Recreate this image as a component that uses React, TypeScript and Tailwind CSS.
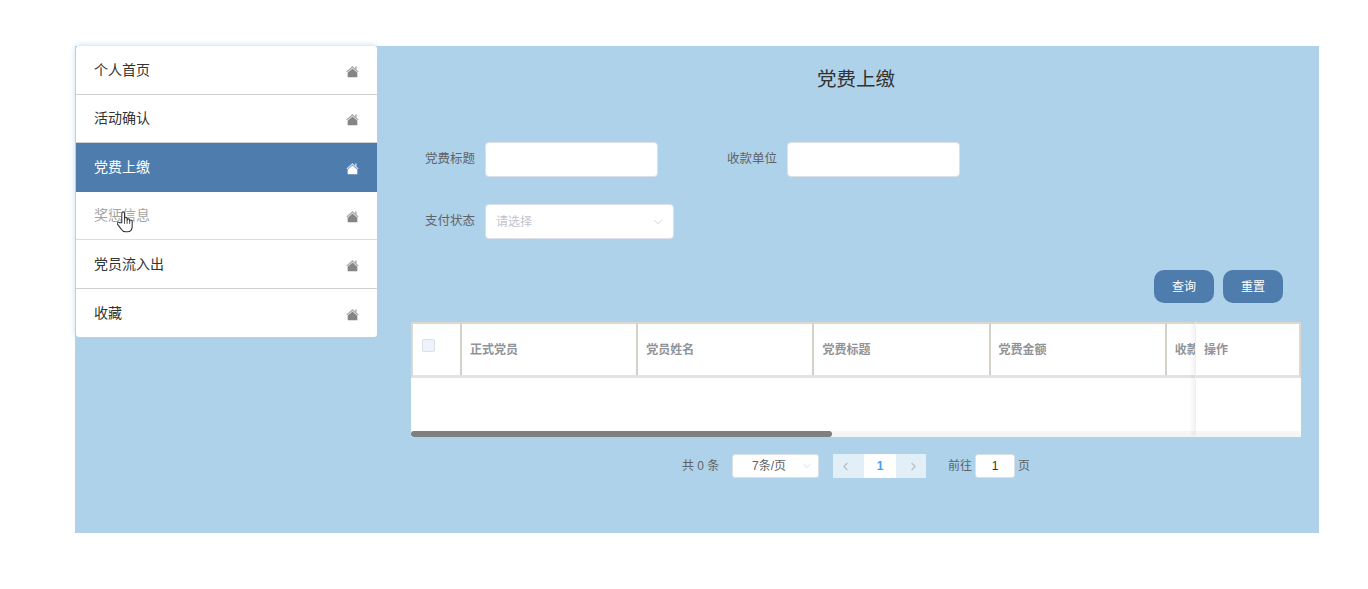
import React from "react";
import { ChevronDown, ChevronLeft, ChevronRight } from "lucide-react";

const items = ["个人首页", "活动确认", "党费上缴", "奖惩信息", "党员流入出", "收藏"];

function House({ className }: { className: string }) {
  return (
    <svg viewBox="0 0 14 13" className={className} fill="currentColor">
      <path d="M7 .6 L.4 6.6 L1.3 7.5 L7 2.4 L12.7 7.5 L13.6 6.6 L11.4 4.6 V1.2 H9.8 V3.2 Z" opacity="0.7" />
      <path d="M7 3.2 L1.8 7.8 V12.8 H12.2 V7.8 Z" />
    </svg>
  );
}

function Hand() {
  return (
    <svg viewBox="1 1 16 20.5" className="absolute left-[41px] top-[19.5px] w-[17px] h-[22px]">
      <path
        d="M5.5 12 V3 a1.3 1.3 0 0 1 2.6 0 V9 V8 a1.2 1.2 0 0 1 2.4 0 V9.5 a1.2 1.2 0 0 1 2.4 0 V10.5 a1.2 1.2 0 0 1 2.4 0 V15 c0 3 -1.6 5.5 -4.5 5.5 H9 c-2 0 -3 -1 -4 -2.5 L1.5 13.5 c-.9 -1.3 .8 -2.6 2 -1.5 Z"
        fill="#fff"
        stroke="#333"
        strokeWidth="1"
        strokeLinejoin="round"
      />
      <path d="M8.1 9 V13 M10.5 9.5 V13 M12.9 10.5 V13" stroke="#333" strokeWidth="0.8" fill="none" />
    </svg>
  );
}

const cols = ["正式党员", "党员姓名", "党费标题", "党费金额", "收款单位"];

export default function App() {
  return (
    <div className="w-[1368px] h-[589px] bg-white pt-[46px] pl-[75px] overflow-hidden font-['Liberation_Sans','Noto_Sans_CJK_SC',sans-serif]">
      <div className="w-[1244px] h-[487px] bg-[#aed2ea] flex">
        <ul className="w-[301px] h-[291px] ml-px bg-white rounded-[3px] shadow-[0_0_6px_rgba(174,210,234,0.9)] shrink-0 overflow-hidden">
          {items.map((t, i) => (
            <li
              key={t}
              className={`relative h-[48.5px] pl-[18px] pr-[18px] flex items-center justify-between text-[14px] border-b ${
                i === 2
                  ? "bg-[#4d7cad] text-white border-[#4d7cad]"
                  : i === 3
                    ? "text-[#a3a3a3] border-[#dcdcdc]"
                    : "text-[#333] border-[#d0d0d0]"
              } ${i === 5 ? "border-b-0" : ""}`}
            >
              <span className="mt-[1px]">{t}</span>
              <House className={`w-[13px] h-[13px] mt-[3px] ${i === 2 ? "text-white" : "text-[#858585]"}`} />
              {i === 3 && <Hand />}
            </li>
          ))}
        </ul>

        <div className="flex-1 pl-[34px] pr-[18px] min-w-0">
          <h1 className="text-[19.5px] leading-[28px] text-[#333] text-center mt-[19px]">党费上缴</h1>

          <div className="flex items-center mt-[49px] h-[35px] text-[12.5px] text-[#606266]">
            <label className="w-[74px] pr-[10px] text-right whitespace-nowrap">党费标题</label>
            <div className="w-[173px] h-[35px] bg-white rounded-[4px] border border-[#dcdfe6]" />
            <label className="w-[129px] pr-[10px] text-right whitespace-nowrap">收款单位</label>
            <div className="w-[173px] h-[35px] bg-white rounded-[4px] border border-[#dcdfe6]" />
          </div>

          <div className="flex items-center mt-[27px] h-[35px] text-[12.5px] text-[#606266]">
            <label className="w-[74px] pr-[10px] text-right whitespace-nowrap">支付状态</label>
            <div className="w-[189px] h-[35px] bg-white rounded-[4px] border border-[#dcdfe6] flex items-center justify-between pl-[10px] pr-[8px] text-[12px] text-[#c0c4cc]">
              <span>请选择</span>
              <ChevronDown className="w-[14px] h-[14px]" strokeWidth={1.2} />
            </div>
          </div>

          <div className="flex justify-end gap-[9px] mt-[31px] pr-[18px]">
            <button className="w-[60px] h-[33px] rounded-[10px] bg-[#4d7cad] text-white text-[12px]">查询</button>
            <button className="w-[60px] h-[33px] rounded-[10px] bg-[#4d7cad] text-white text-[12px]">重置</button>
          </div>

          <div className="relative mt-[19px] w-[890px] h-[115px] bg-white overflow-hidden">
            <div className="flex h-[56px] w-[784px] overflow-hidden border-t-2 border-l-2 border-[#dcd8d0] border-b-[3px] border-b-[#e2e2e6] text-[12px] font-bold text-[#909399]">
              <div className="w-[49px] shrink-0 border-r-2 border-[#d5d1c8] pl-[9px] pt-[15px]">
                <div className="w-[13px] h-[13px] rounded-[2px] bg-[#edf2fc] border border-[#dcdfe6]" />
              </div>
              {cols.map((c) => (
                <div key={c} className="w-[176.2px] shrink-0 border-r-2 border-[#d5d1c8] pl-[8px] flex items-center whitespace-nowrap">
                  {c}
                </div>
              ))}
            </div>
            <div className="absolute left-0 right-0 bottom-0 h-[6px] bg-[#f5f5f5]" />
            <div className="absolute left-0 bottom-0 w-[421px] h-[6px] rounded-[3px] bg-[#7f7f7f]" />
            <div className="absolute right-0 top-0 bottom-0 w-[106px] bg-white border-l border-[#f0f0f0] shadow-[-3px_0_4px_rgba(0,0,0,0.05)]">
              <div className="h-[56px] border-t-2 border-r-2 border-[#dcd8d0] border-b-[3px] border-b-[#e2e2e6] pl-[8px] flex items-center text-[12px] font-bold text-[#909399]">
                操作
              </div>
              <div className="absolute left-0 right-0 bottom-0 h-[6px] bg-[#f5f5f5]" />
            </div>
          </div>

          <div className="flex items-center mt-[17px] h-[24px] pl-[271px] text-[12px] text-[#606266]">
            <span className="w-[50px] whitespace-nowrap">共 0 条</span>
            <div className="w-[87px] h-[24px] bg-white rounded-[3px] border border-[#dcdfe6] flex items-center justify-between pl-[19px] pr-[5px]">
              <span>7条/页</span>
              <ChevronDown className="w-[12px] h-[12px] text-[#c0c4cc]" strokeWidth={1.2} />
            </div>
            <div className="flex ml-[14px] h-[24px]">
              <div className="w-[31px] bg-[#e3eff7] flex items-center justify-center pr-[6px] text-[#b4bcc6]">
                <ChevronLeft className="w-[13px] h-[13px]" strokeWidth={2} />
              </div>
              <div className="w-[32px] bg-white flex items-center justify-center text-[#409eff] font-bold">1</div>
              <div className="w-[30px] bg-[#e3eff7] flex items-center justify-center pl-[4px] text-[#b4bcc6]">
                <ChevronRight className="w-[13px] h-[13px]" strokeWidth={2} />
              </div>
            </div>
            <span className="ml-[22px] whitespace-nowrap">前往</span>
            <div className="w-[40px] h-[24px] ml-[3px] bg-white rounded-[3px] border border-[#dcdfe6] flex items-center justify-center text-[#333]">1</div>
            <span className="ml-[3px]">页</span>
          </div>
        </div>
      </div>
    </div>
  );
}
